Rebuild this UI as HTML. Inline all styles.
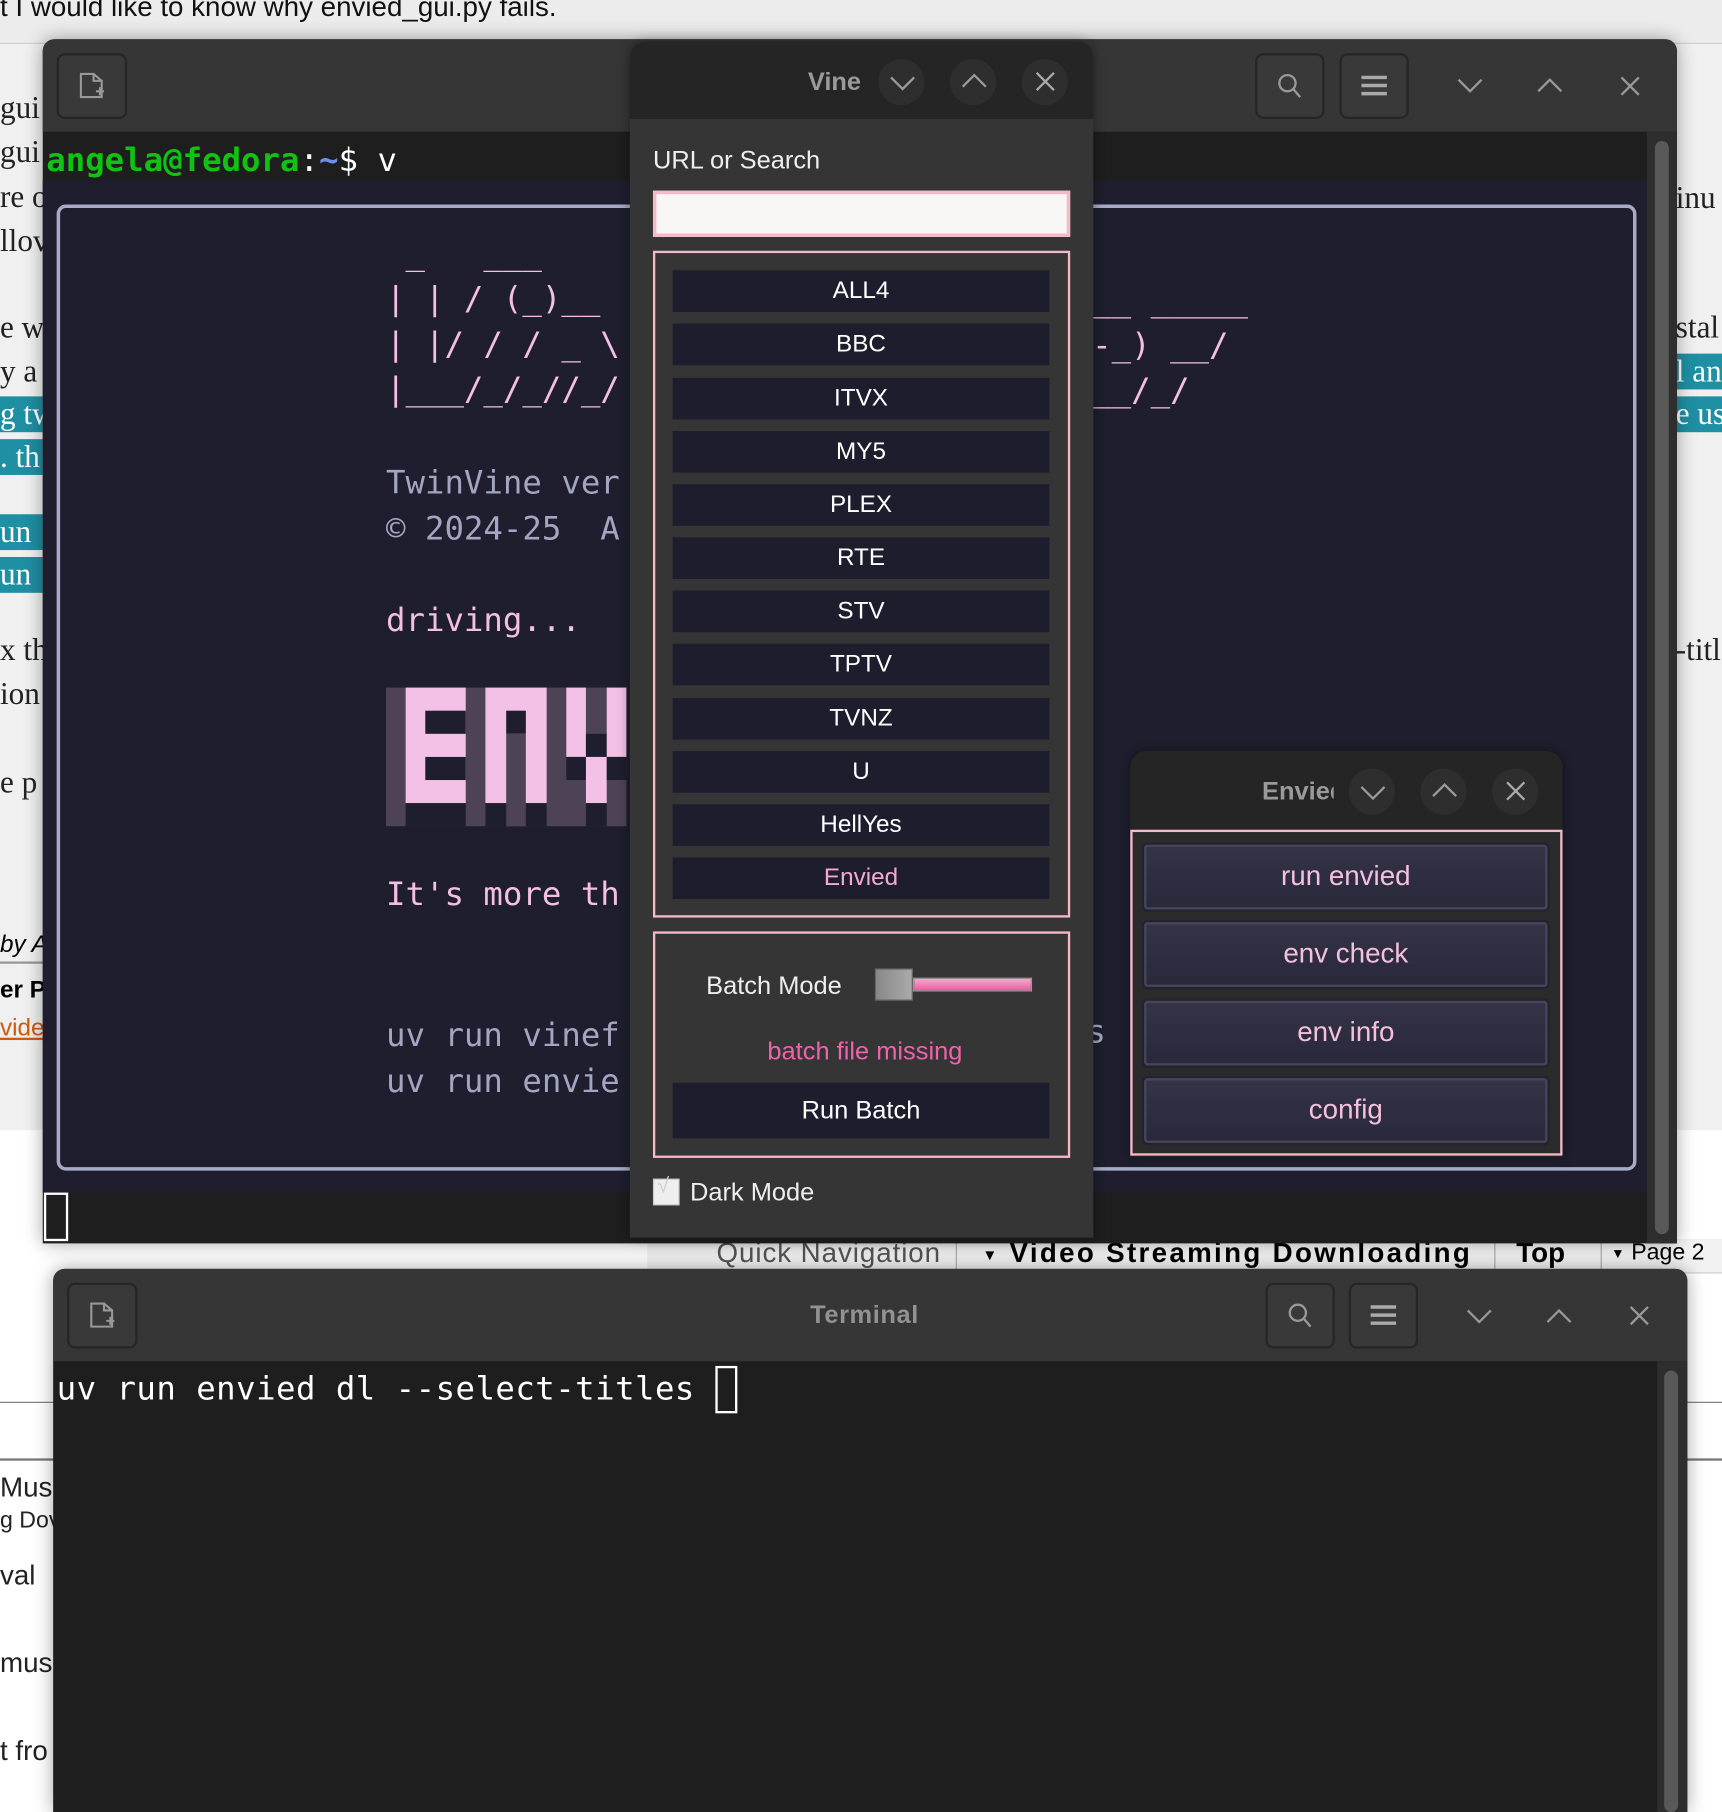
<!DOCTYPE html>
<html><head><meta charset="utf-8">
<style>
*{margin:0;padding:0;box-sizing:border-box}
html,body{width:1722px;height:1812px;overflow:hidden;background:#f4f4f4}
#r{position:absolute;left:0;top:0;width:1490px;height:1568px;transform:scale(1.15570,1.15561);transform-origin:0 0;font-family:"Liberation Sans","DejaVu Sans",sans-serif}
.a{position:absolute}
.serif{font-family:"Liberation Serif",serif;font-size:27px;color:#222;white-space:nowrap}
.teal{background:#1f8fa3;color:#fff}
.mono{font-family:"DejaVu Sans Mono","Liberation Mono",monospace;white-space:pre}
.hb{position:absolute;border:2px solid #262626;border-radius:7px;background:#393939}
.vb{position:absolute;left:582px;width:326px;height:36px;background:#1e1d2e;color:#fff;font-size:21px;text-align:center;line-height:36px}
.eb{position:absolute;left:990px;width:349px;height:56px;background:linear-gradient(#343347,#2a293b);border:2px solid #474659;border-radius:3px;color:#f4c0e0;font-size:24px;text-align:center;line-height:52px;box-shadow:0 0 0 2px #232232}
.circ{position:absolute;width:40px;height:40px;border-radius:50%;background:#2e2e2e}
svg{position:absolute;overflow:visible}
</style></head><body><div id="r">
<!-- background page -->
<div class="a" style="left:0;top:0;width:1490px;height:38px;background:#ececec;border-bottom:1px solid #ccc"></div>
<div class="a" style="left:0;top:-7px;font-size:24px;color:#111;white-space:nowrap">t I would like to know why envied_gui.py fails.</div>
<div class="a" style="left:0;top:38px;width:1490px;height:940px;background:#eff0ef"></div>
<div class="a" style="left:0;top:978px;width:1490px;height:590px;background:#fff"></div>
<div class="a serif" style="left:0;top:78px">gui</div>
<div class="a serif" style="left:0;top:116px">gui</div>
<div class="a serif" style="left:0;top:155px">re o</div>
<div class="a serif" style="left:0;top:193px">llov</div>
<div class="a serif" style="left:0;top:268px">e wl</div>
<div class="a serif" style="left:0;top:306px">y a</div>
<div class="a serif teal" style="left:0;top:343px;width:37px">g tw</div>
<div class="a serif teal" style="left:0;top:380px;width:37px">. th</div>
<div class="a serif teal" style="left:0;top:445px;width:37px">un</div>
<div class="a serif teal" style="left:0;top:482px;width:37px">un</div>
<div class="a serif" style="left:0;top:547px">x th</div>
<div class="a serif" style="left:0;top:585px">ion</div>
<div class="a serif" style="left:0;top:662px">e p</div>
<div class="a" style="left:0;top:806px;font-size:21px;font-style:italic">by A</div>
<div class="a" style="left:0;top:832px;width:37px;height:2px;background:#999"></div>
<div class="a" style="left:0;top:845px;font-size:21px;font-weight:bold">er P</div>
<div class="a" style="left:0;top:878px;font-size:21px;color:#d05a10;text-decoration:underline">vide</div>
<div class="a serif" style="left:1450px;top:156px">inu</div>
<div class="a serif" style="left:1450px;top:268px">stal</div>
<div class="a serif teal" style="left:1450px;top:306px;width:40px">l an</div>
<div class="a serif teal" style="left:1450px;top:343px;width:40px">e us</div>
<div class="a serif" style="left:1450px;top:547px">-titl</div>
<div class="a" style="left:0;top:1213px;width:1490px;height:1px;background:#777"></div>
<div class="a" style="left:0;top:1262px;width:1490px;height:2px;background:#777"></div>
<div class="a" style="left:0;top:1274px;font-size:24px;color:#222">Musi</div>
<div class="a" style="left:0;top:1305px;font-size:20px;color:#222">g Dov</div>
<div class="a" style="left:0;top:1350px;font-size:24px;color:#222">val</div>
<div class="a" style="left:0;top:1426px;font-size:24px;color:#222">musi</div>
<div class="a" style="left:0;top:1502px;font-size:24px;color:#222">t fro</div>
<!-- quick nav -->
<div class="a" style="left:560px;top:1072px;width:930px;height:30px;background:#f2f2f2;border-bottom:1px solid #ccc"></div>
<div class="a" style="left:620px;top:1071px;font-size:24px;color:#555;white-space:nowrap;letter-spacing:0.8px">Quick Navigation</div>
<div class="a" style="left:827px;top:1074px;width:1px;height:26px;background:#aaa"></div>
<div class="a" style="left:850px;top:1071px;font-size:24px;font-weight:bold;color:#000;white-space:nowrap;letter-spacing:2px"><span style="font-size:13px;vertical-align:middle">▼</span> Video Streaming Downloading</div>
<div class="a" style="left:1293px;top:1074px;width:1px;height:26px;background:#aaa"></div>
<div class="a" style="left:1312px;top:1071px;font-size:24px;font-weight:bold;color:#000">Top</div>
<div class="a" style="left:1385px;top:1074px;width:1px;height:26px;background:#aaa"></div>
<div class="a" style="left:1394px;top:1073px;font-size:20px;color:#000;white-space:nowrap"><span style="font-size:12px;vertical-align:middle">▼</span> Page 2</div>

<!-- top terminal -->
<div class="a" style="left:37px;top:34px;width:1414px;height:1042px;background:#1e1e1e;border-radius:10px 10px 0 0;box-shadow:0 0 16px rgba(0,0,0,.35)"></div>
<div class="a" style="left:37px;top:34px;width:1414px;height:80px;background:#363636;border-radius:10px 10px 0 0"></div>
<div class="hb" style="left:49px;top:46px;width:61px;height:57px"></div>
<svg style="left:68px;top:62px" width="24" height="24" viewBox="0 0 24 24"><path d="M2 2h11v6h7v14H2z M13 2l7 6" fill="none" stroke="#999" stroke-width="1.8"/><path d="M15 17h7M18.5 13.5v7" stroke="#999" stroke-width="1.8"/></svg>
<div class="hb" style="left:1086px;top:46px;width:60px;height:57px"></div>
<svg style="left:1104px;top:63px" width="24" height="24"><circle cx="10" cy="9" r="7" fill="none" stroke="#999" stroke-width="2"/><path d="M15 14l6 7" stroke="#999" stroke-width="2"/></svg>
<div class="hb" style="left:1159px;top:46px;width:60px;height:57px"></div>
<svg style="left:1178px;top:64px" width="22" height="20"><path d="M0 3h22M0 10h22M0 17h22" stroke="#aaa" stroke-width="3"/></svg>
<svg style="left:1261px;top:67px" width="22" height="14"><path d="M1 2l10 10 10-10" fill="none" stroke="#999" stroke-width="2"/></svg>
<svg style="left:1330px;top:67px" width="22" height="14"><path d="M1 12l10-10 10 10" fill="none" stroke="#999" stroke-width="2"/></svg>
<svg style="left:1402px;top:66px" width="17" height="17"><path d="M1 1l15 15M16 1L1 16" stroke="#999" stroke-width="2"/></svg>
<div class="a mono" style="left:40px;top:122px;font-size:28px;color:#fff"><span style="color:#12c212;font-weight:bold">angela@fedora</span>:<span style="color:#6f8ff0;font-weight:bold">~</span>$ v</div>
<div class="a" style="left:37px;top:156px;width:1388px;height:876px;background:#1f1e2e"></div>
<div class="a" style="left:49px;top:177px;width:1367px;height:836px;border:3px solid #a7abc6;border-radius:8px"></div>
<div class="a" style="left:1425px;top:114px;width:26px;height:962px;background:#2e2e2e"></div>
<div class="a" style="left:1432px;top:122px;width:12px;height:946px;background:#595959;border-radius:6px"></div>
<div class="a" style="left:38px;top:1032px;width:21px;height:42px;border:2px solid #fff"></div>
<div class="a mono" style="left:334px;top:200px;font-size:28px;line-height:39px;color:#f3bfe4"> _   ___
| | / (_)__
| |/ / / _ \
|___/_/_//_/</div>
<div class="a mono" style="left:945px;top:240px;font-size:28px;line-height:39px;color:#f3bfe4">__ _____
-_) __/
__/_/</div>
<div class="a mono" style="left:334px;top:398px;font-size:28px;line-height:40px;color:#a3a6c2">TwinVine ver
© 2024-25  A</div>
<div class="a mono" style="left:334px;top:520px;font-size:28px;color:#f3bfe4">driving...</div>
<svg style="left:334px;top:595px" width="208" height="120">
<rect x="0" y="0" width="208" height="120" fill="#4e4257"/>
<!-- E -->
<rect x="17" y="0" width="52" height="100" fill="#f3c0e6"/>
<rect x="34" y="20" width="35" height="20" fill="#1f1e2e"/><rect x="34" y="60" width="35" height="20" fill="#1f1e2e"/>
<rect x="17" y="100" width="52" height="20" fill="#1f1e2e"/>
<!-- N -->
<rect x="86" y="0" width="53" height="100" fill="#f3c0e6"/>
<rect x="104" y="20" width="17" height="20" fill="#1f1e2e"/>
<rect x="104" y="40" width="17" height="80" fill="#4e4257"/>
<rect x="86" y="100" width="18" height="20" fill="#1f1e2e"/><rect x="121" y="100" width="18" height="20" fill="#1f1e2e"/>
<!-- V -->
<rect x="156" y="0" width="17" height="60" fill="#f3c0e6"/><rect x="156" y="60" width="17" height="20" fill="#1f1e2e"/>
<rect x="173" y="40" width="18" height="20" fill="#1f1e2e"/><rect x="173" y="60" width="18" height="40" fill="#f3c0e6"/><rect x="173" y="100" width="18" height="20" fill="#1f1e2e"/>
<rect x="191" y="0" width="17" height="60" fill="#f3c0e6"/><rect x="191" y="60" width="17" height="20" fill="#1f1e2e"/>
</svg>
<div class="a mono" style="left:334px;top:757px;font-size:28px;color:#f3bfe4">It's more th</div>
<div class="a mono" style="left:334px;top:876px;font-size:28px;line-height:40px;color:#a3a6c2">uv run vinef
uv run envie</div>
<div class="a mono" style="left:940px;top:876px;font-size:28px;color:#a3a6c2">s</div>

<!-- bottom terminal -->
<div class="a" style="left:46px;top:1098px;width:1414px;height:470px;background:#1e1e1e;border-radius:10px 10px 0 0;box-shadow:0 0 16px rgba(0,0,0,.35)"></div>
<div class="a" style="left:46px;top:1098px;width:1414px;height:80px;background:#363636;border-radius:10px 10px 0 0"></div>
<div class="hb" style="left:58px;top:1110px;width:61px;height:57px"></div>
<svg style="left:77px;top:1126px" width="24" height="24"><path d="M2 2h11v6h7v14H2z M13 2l7 6" fill="none" stroke="#999" stroke-width="1.8"/><path d="M15 17h7M18.5 13.5v7" stroke="#999" stroke-width="1.8"/></svg>
<div class="a" style="left:701px;top:1125px;font-size:22px;font-weight:bold;color:#929292;letter-spacing:0.5px">Terminal</div>
<div class="hb" style="left:1095px;top:1110px;width:60px;height:57px"></div>
<svg style="left:1113px;top:1127px" width="24" height="24"><circle cx="10" cy="9" r="7" fill="none" stroke="#999" stroke-width="2"/><path d="M15 14l6 7" stroke="#999" stroke-width="2"/></svg>
<div class="hb" style="left:1167px;top:1110px;width:60px;height:57px"></div>
<svg style="left:1186px;top:1128px" width="22" height="20"><path d="M0 3h22M0 10h22M0 17h22" stroke="#aaa" stroke-width="3"/></svg>
<svg style="left:1269px;top:1132px" width="22" height="14"><path d="M1 2l10 10 10-10" fill="none" stroke="#999" stroke-width="2"/></svg>
<svg style="left:1338px;top:1132px" width="22" height="14"><path d="M1 12l10-10 10 10" fill="none" stroke="#999" stroke-width="2"/></svg>
<svg style="left:1410px;top:1130px" width="17" height="17"><path d="M1 1l15 15M16 1L1 16" stroke="#999" stroke-width="2"/></svg>
<div class="a" style="left:1434px;top:1178px;width:26px;height:390px;background:#2e2e2e"></div>
<div class="a" style="left:1440px;top:1186px;width:12px;height:382px;background:#595959;border-radius:6px"></div>
<div class="a mono" style="left:49px;top:1185px;font-size:28px;color:#fff;letter-spacing:0.4px">uv run envied dl --select-titles</div>
<div class="a" style="left:619px;top:1182px;width:19px;height:41px;border:2px solid #fff"></div>

<!-- Vine window -->
<div class="a" style="left:545px;top:36px;width:401px;height:1035px;background:#353535;border-radius:14px 14px 0 0;box-shadow:0 0 10px rgba(0,0,0,.4)"></div>
<div class="a" style="left:545px;top:36px;width:401px;height:67px;background:#252525;border-radius:14px 14px 0 0"></div>
<div class="a" style="left:699px;top:58px;font-size:22px;font-weight:bold;color:#9a9a9a">Vine</div>
<div class="circ" style="left:760px;top:51px"></div><div class="circ" style="left:822px;top:51px"></div><div class="circ" style="left:884px;top:51px"></div>
<svg style="left:770px;top:65px" width="22" height="14"><path d="M1 2l10 10 10-10" fill="none" stroke="#9a9a9a" stroke-width="2"/></svg>
<svg style="left:832px;top:63px" width="22" height="14"><path d="M1 12l10-10 10 10" fill="none" stroke="#9a9a9a" stroke-width="2"/></svg>
<svg style="left:896px;top:62px" width="17" height="17"><path d="M1 1l15 15M16 1L1 16" stroke="#aaa" stroke-width="2"/></svg>
<div class="a" style="left:565px;top:126px;font-size:22px;color:#eee">URL or Search</div>
<div class="a" style="left:565px;top:165px;width:361px;height:40px;background:#f8f7f5;border:3px solid #f6b9c8"></div>
<div class="a" style="left:565px;top:217px;width:361px;height:577px;border:2px solid #f6b9c8"></div>
<div class="vb" style="top:234px">ALL4</div>
<div class="vb" style="top:280px">BBC</div>
<div class="vb" style="top:327px">ITVX</div>
<div class="vb" style="top:373px">MY5</div>
<div class="vb" style="top:419px">PLEX</div>
<div class="vb" style="top:465px">RTE</div>
<div class="vb" style="top:511px">STV</div>
<div class="vb" style="top:557px">TPTV</div>
<div class="vb" style="top:604px">TVNZ</div>
<div class="vb" style="top:650px">U</div>
<div class="vb" style="top:696px">HellYes</div>
<div class="vb" style="top:742px;color:#f2a9d4">Envied</div>
<div class="a" style="left:565px;top:806px;width:361px;height:196px;border:2px solid #f6b9c8"></div>
<div class="a" style="left:611px;top:840px;font-size:22px;color:#eee">Batch Mode</div>
<div class="a" style="left:790px;top:846px;width:103px;height:12px;background:linear-gradient(#f7a6cd,#e5609f);border:1px solid #999"></div>
<div class="a" style="left:757px;top:838px;width:33px;height:28px;background:linear-gradient(90deg,#888,#aaa);border:1px solid #666"></div>
<div class="a" style="left:664px;top:897px;font-size:22px;color:#f063ac">batch file missing</div>
<div class="vb" style="top:937px;height:48px;line-height:48px;font-size:22px">Run Batch</div>
<div class="a" style="left:565px;top:1020px;width:23px;height:23px;background:#eee;border:1px solid #ccc"></div>
<div class="a" style="left:569px;top:1016px;font-size:18px;color:#ccc">√</div>
<div class="a" style="left:597px;top:1019px;font-size:22px;color:#eee">Dark Mode</div>

<!-- Envied window -->
<div class="a" style="left:978px;top:650px;width:374px;height:351px;background:#2a2a2a;border-radius:14px 14px 0 0;box-shadow:0 0 10px rgba(0,0,0,.4)"></div>
<div class="a" style="left:978px;top:650px;width:374px;height:68px;background:#252525;border-radius:14px 14px 0 0"></div>
<div class="a" style="left:1092px;top:672px;width:62px;overflow:hidden;font-size:22px;font-weight:bold;color:#9a9a9a;white-space:nowrap">Envied</div>
<div class="circ" style="left:1167px;top:665px"></div><div class="circ" style="left:1229px;top:665px"></div><div class="circ" style="left:1291px;top:665px"></div>
<svg style="left:1177px;top:679px" width="22" height="14"><path d="M1 2l10 10 10-10" fill="none" stroke="#9a9a9a" stroke-width="2"/></svg>
<svg style="left:1239px;top:677px" width="22" height="14"><path d="M1 12l10-10 10 10" fill="none" stroke="#9a9a9a" stroke-width="2"/></svg>
<svg style="left:1303px;top:676px" width="17" height="17"><path d="M1 1l15 15M16 1L1 16" stroke="#aaa" stroke-width="2"/></svg>
<div class="a" style="left:978px;top:718px;width:374px;height:282px;border:2px solid #f6b9c8;background:#2b2b2b"></div>
<div class="eb" style="top:731px">run envied</div>
<div class="eb" style="top:798px">env check</div>
<div class="eb" style="top:866px">env info</div>
<div class="eb" style="top:933px">config</div>
</div></body></html>
